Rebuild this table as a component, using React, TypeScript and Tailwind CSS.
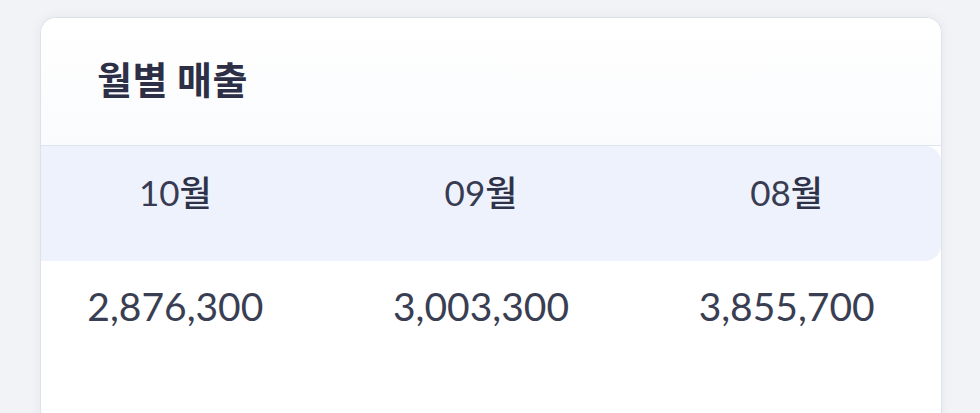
const months = [
	{ num: '10', amount: '2,876,300' },
	{ num: '09', amount: '3,003,300' },
	{ num: '08', amount: '3,855,700' },
];

const App = (): JSX.Element => {
	return (
		<div className="w-[980px] h-[413px] overflow-hidden bg-[#f2f3f6] pt-[17px] pl-[40px]">
			{/* card: title header, month band, amounts */}
			<div
				className="w-[902px] h-[410px] rounded-[16px] border border-[#dde1ea] bg-white shadow-[0_0_8px_rgba(200,205,220,0.35)] overflow-hidden"
				style={{ fontFamily: 'Lato, "Noto Sans CJK KR", sans-serif' }}
			>
				<div className="h-[128px] flex items-center pl-[56px] pb-[8px] border-b border-[#dfe4ee] bg-gradient-to-b from-white to-[#fafbfd]">
					<h2
						className="text-[38px] font-bold text-[#2c2f45] tracking-[0.5px]"
						style={{ fontFamily: '"Noto Sans CJK KR", sans-serif' }}
					>
						월별 매출
					</h2>
				</div>

				<div className="h-[115px] grid grid-cols-3 gap-x-[105px] pl-[34px] pr-[54px] items-center bg-[#eef2fc] rounded-r-[16px]">
					{months.map((m) => (
						<div key={m.num} className="text-center text-[35px] text-[#383c52] pb-[24px]">
							{m.num}
							<span className="font-medium text-[#2e3248]" style={{ fontFamily: '"Noto Sans CJK KR", sans-serif' }}>
								월
							</span>
						</div>
					))}
				</div>

				<div className="grid grid-cols-3 gap-x-[105px] pl-[34px] pr-[54px] pt-[21px]">
					{months.map((m) => (
						<div key={m.amount} className="text-center text-[39px] text-[#3a3e52] leading-[48px]">
							{m.amount}
						</div>
					))}
				</div>
			</div>
		</div>
	);
};

export default App;
